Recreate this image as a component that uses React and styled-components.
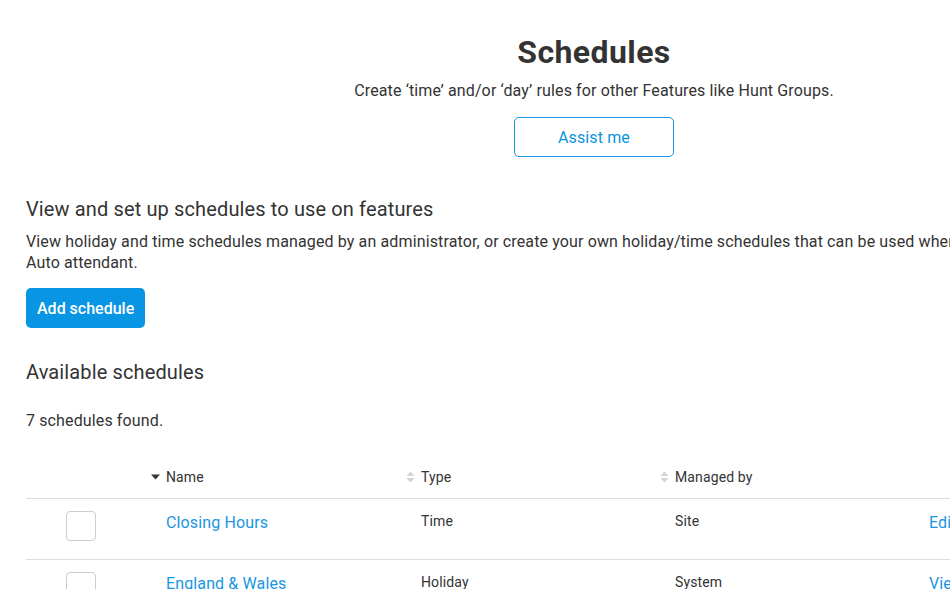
import styled, { createGlobalStyle } from 'styled-components';

const GlobalStyle = createGlobalStyle`
  html, body {
    margin: 0;
    overflow: hidden;
    background: #fff;
  }
  body {
    font-family: Roboto, "Liberation Sans", Arial, sans-serif;
    color: #333;
    letter-spacing: 0.008em;
  }
`;

const schedules = [
    { name: 'Closing Hours', type: 'Time', managedBy: 'Site', action: 'Edit' },
    { name: 'England & Wales', type: 'Holiday', managedBy: 'System', action: 'View' },
    { name: 'Scotland', type: 'Holiday', managedBy: 'System', action: 'View' },
];

function SortIcon({ active }) {
    if (active) {
        return (
            <svg width="9" height="6" viewBox="0 0 9 6">
                <path d="M0 0.5h9L4.5 5.5z" fill="#333" />
            </svg>
        );
    }
    return (
        <svg width="9" height="12" viewBox="0 0 9 12">
            <path d="M0.5 5L4.5 0.5L8.5 5z" fill="#d4d4d4" />
            <path d="M0.5 7L4.5 11.5L8.5 7z" fill="#d4d4d4" />
        </svg>
    );
}

function App() {
    return (
        <>
            <GlobalStyle />
            <Page>
                <Intro>
                    <Title>Schedules</Title>
                    <Lead>Create ‘time’ and/or ‘day’ rules for other Features like Hunt Groups.</Lead>
                    <OutlineButton>Assist me</OutlineButton>
                </Intro>

                <SectionTitle>View and set up schedules to use on features</SectionTitle>
                <Text>
                    View holiday and time schedules managed by an administrator, or create your own holiday/time schedules that can be used when setting up features like Hunt groups or an Auto attendant.
                </Text>
                <PrimaryButton>Add schedule</PrimaryButton>

                <SectionTitle $top={30}>Available schedules</SectionTitle>
                <Count>7 schedules found.</Count>

                <Table>
                    <HeadRow>
                        <HeadCell />
                        <HeadCell><SortIcon active />Name</HeadCell>
                        <HeadCell><SortIcon />Type</HeadCell>
                        <HeadCell><SortIcon />Managed by</HeadCell>
                        <HeadCell />
                    </HeadRow>
                    {schedules.map((s) => (
                        <Row key={s.name}>
                            <CheckCell><Checkbox /></CheckCell>
                            <Cell><Link>{s.name}</Link></Cell>
                            <Cell $small>{s.type}</Cell>
                            <Cell $small>{s.managedBy}</Cell>
                            <Cell><Link>{s.action}</Link></Cell>
                        </Row>
                    ))}
                </Table>
            </Page>
        </>
    );
}

const Page = styled.div`
    width: 1260px;
    padding: 0 26px;
`;

const Intro = styled.div`
    width: 1136px;
    display: flex;
    flex-direction: column;
    align-items: center;
    padding-top: 33px;
`;

const Title = styled.h1`
    margin: 0;
    font-size: 32px;
    line-height: 38px;
    font-weight: 700;
    letter-spacing: 0.4px;
    color: #333;
`;

const Lead = styled.p`
    margin: 8px 0 0;
    font-size: 16px;
    line-height: 24px;
`;

const OutlineButton = styled.button`
    margin-top: 14px;
    width: 160px;
    height: 40px;
    border: 1px solid #1b98e4;
    border-radius: 5px;
    background: #fff;
    color: #0a94e0;
    font-family: inherit;
    font-size: 16px;
    letter-spacing: inherit;
    cursor: pointer;
`;

const SectionTitle = styled.h2`
    margin: ${(p) => p.$top || 38}px 0 0;
    font-size: 20px;
    line-height: 28px;
    font-weight: 400;
    color: #333;
`;

const Text = styled.p`
    margin: 8px 0 0;
    font-size: 16px;
    line-height: 21px;
`;

const PrimaryButton = styled.button`
    display: block;
    margin-top: 15px;
    height: 40px;
    padding: 0 11px;
    border: none;
    border-radius: 5px;
    background: #0895e3;
    color: #fff;
    font-family: inherit;
    font-size: 16px;
    font-weight: 500;
    cursor: pointer;
`;

const Count = styled.p`
    margin: 23px 0 0;
    font-size: 16px;
    line-height: 24px;
`;

const Table = styled.div`
    width: 1136px;
    margin-top: 24px;
`;

const columns = '125px 255px 254px 254px 1fr';

const HeadRow = styled.div`
    display: grid;
    grid-template-columns: ${columns};
    border-bottom: 1px solid #ddd;
`;

const HeadCell = styled.div`
    display: flex;
    align-items: center;
    gap: 6px;
    padding: 10px 0 11px;
    font-size: 14px;
    line-height: 20px;
    height: 20px;
`;

const Row = styled.div`
    display: grid;
    grid-template-columns: ${columns};
    height: 60px;
    border-bottom: 1px solid #ddd;
`;

const Cell = styled.div`
    padding: 12px 15px 0;
    font-size: ${(p) => (p.$small ? '14px' : '16px')};
    line-height: ${(p) => (p.$small ? '20px' : '24px')};
    white-space: nowrap;
`;

const CheckCell = styled.div`
    padding: 12px 0 0 40px;
`;

const Checkbox = styled.div`
    width: 28px;
    height: 28px;
    border: 1px solid #ccc;
    border-radius: 4px;
    background: #fff;
`;

const Link = styled.a`
    color: #1a96e2;
    text-decoration: none;
    cursor: pointer;
`;

export default App;
